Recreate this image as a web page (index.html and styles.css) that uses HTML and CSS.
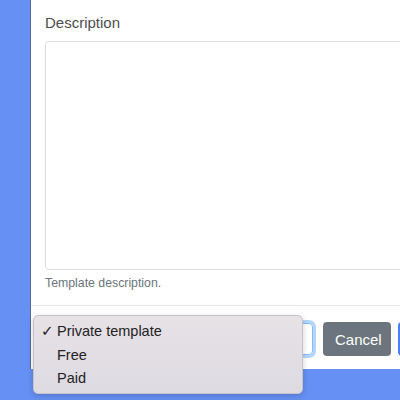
FILE: index.html
```html
<!DOCTYPE html>
<html>
<head>
<meta charset="utf-8">
<link rel="stylesheet" href="styles.css">
</head>
<body>
<div class="modal">
  <div class="modal-body">
    <label class="label">Description</label>
    <textarea class="textarea"></textarea>
    <div class="help">Template description.</div>
  </div>
  <div class="modal-footer">
    <div class="select"></div>
    <button class="btn btn-secondary">Cancel</button>
    <button class="btn btn-primary" aria-label="Save"></button>
  </div>
</div>
<div class="menu">
  <div class="item"><span class="check">✓</span>Private template</div>
  <div class="item">Free</div>
  <div class="item">Paid</div>
</div>
</body>
</html>
```
FILE: styles.css
```css
html, body {
  margin: 0;
  padding: 0;
  width: 400px;
  height: 400px;
  overflow: hidden;
  background: #6690f4;
  font-family: "Liberation Sans", Arial, sans-serif;
}
.modal {
  margin-left: 30px;
  width: 420px;
  height: 369px;
  background: #fff;
  border-left: 1px solid #5b6a8a;
  display: flex;
  flex-direction: column;
  box-sizing: border-box;
}
.modal-body {
  padding: 12px 0 12px 14px;
  display: flex;
  flex-direction: column;
}
.label {
  font-size: 15px;
  line-height: 22px;
  color: #4d4d4d;
  margin-bottom: 7px;
}
.textarea {
  display: block;
  width: 420px;
  height: 229px;
  box-sizing: border-box;
  border: 1px solid #dcdee2;
  border-radius: 4px;
  resize: none;
  margin: 0;
  padding: 0;
  background: #fff;
}
.help {
  margin-top: 4px;
  font-size: 12.3px;
  line-height: 19px;
  color: #6c757d;
}
.modal-footer {
  border-top: 1px solid #e4e5ea;
  display: flex;
  align-items: center;
  padding: 16px 0 0 0;
  gap: 7px;
}
.select {
  margin-left: 20px;
  width: 260px;
  height: 30px;
  border: 1px solid #80bdff;
  border-radius: 4px;
  box-shadow: 0 0 0 3px #b3d5fd;
  margin-right: 3px;
  flex: none;
}
.btn {
  height: 34px;
  border: none;
  border-radius: 4px;
  font-family: "Liberation Sans", Arial, sans-serif;
  font-size: 15px;
  color: #fff;
  padding: 0 12px;
  flex: none;
}
.btn-secondary {
  width: 68px;
  background: #6c757d;
}
.btn-primary {
  background: #4a7ef7;
  width: 60px;
}
.menu {
  position: absolute;
  left: 33px;
  top: 315px;
  width: 270px;
  height: 79px;
  box-sizing: border-box;
  border-radius: 5px;
  border: 1px solid #c6c2c8;
  background: linear-gradient(#e6e2e6, #dedae2);
  box-shadow: 0 2px 6px rgba(0,0,0,0.18);
  padding-top: 4px;
}
.item {
  position: relative;
  height: 23.5px;
  line-height: 23.5px;
  padding-left: 23px;
  font-size: 14.5px;
  color: #222;
}
.check {
  position: absolute;
  left: 7px;
  top: 0;
  font-size: 15px;
  font-weight: bold;
  font-family: "DejaVu Sans", sans-serif;
}
```
